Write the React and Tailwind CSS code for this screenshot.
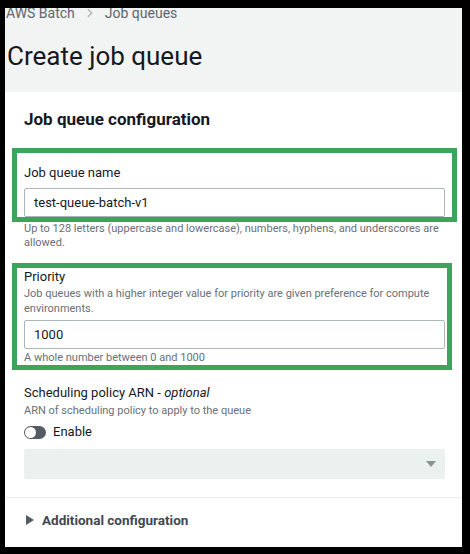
import { ChevronRight } from 'lucide-react';

const font = { fontFamily: 'Roboto, "Noto Sans", sans-serif' };

function TextInput({ value }) {
  return (
    <div className="h-[29px] border border-[#aab7b8] rounded-[2px] bg-white flex items-center px-[9px] text-[13px] text-[#16191f]">
      {value}
    </div>
  );
}

export default function App() {
  return (
    <div className="w-[470px] h-[554px] bg-black pt-[8px] pl-[5px] pr-[8px] pb-[7px]" style={font}>
      <div className="h-full bg-[#f2f3f3] flex flex-col overflow-hidden">
        {/* breadcrumb, cut off at the top */}
        <div className="flex items-center gap-[8px] pl-[1px] -mt-[5px] h-[20px] text-[14px] text-[#5f6670]">
          <span>AWS Batch</span>
          <ChevronRight size={14} className="text-[#aab7b8]" strokeWidth={2.5} />
          <span>Job queues</span>
        </div>

        <h1 className="pl-[2px] mt-[16px] text-[26px] leading-[34px] text-[#16191f] font-normal">
          Create job queue
        </h1>

        <div className="mt-[19px] flex-1 bg-white flex flex-col">
          <div className="pl-[19px] pr-[17px] pt-[16px] pb-[18px]">
            <h2 className="text-[17px] leading-[22px] font-bold text-[#16191f]">
              Job queue configuration
            </h2>
          </div>

          <div className="pl-[19px] pr-[17px] flex flex-col">
            {/* job queue name */}
            <div className="-mx-[12px] border-[5px] border-[#3ca55c] px-[7px] pt-[10px]">
              <div className="text-[13px] leading-[20px] text-[#16191f]">Job queue name</div>
              <div className="mt-[5px]">
                <TextInput value="test-queue-batch-v1" />
              </div>
            </div>
            <div className="text-[11px] leading-[14px] text-[#687078]">
              Up to 128 letters (uppercase and lowercase), numbers, hyphens, and underscores are
              allowed.
            </div>

            {/* priority */}
            <div className="mt-[13px] -ml-[12px] -mr-[7px] border-[5px] border-[#3ca55c] pl-[7px] pr-[2px]">
              <div className="text-[13px] leading-[18px] text-[#16191f]">Priority</div>
              <div className="text-[11px] leading-[15px] text-[#687078]">
                Job queues with a higher integer value for priority are given preference for compute
                environments.
              </div>
              <div className="mt-[4px]">
                <TextInput value="1000" />
              </div>
              <div className="mt-[2px] text-[11px] leading-[14px] text-[#687078]">
                A whole number between 0 and 1000
              </div>
            </div>

            {/* scheduling policy */}
            <div className="mt-[13px] text-[13px] leading-[20px] text-[#16191f]">
              Scheduling policy ARN - <i>optional</i>
            </div>
            <div className="text-[11px] leading-[15px] text-[#687078]">
              ARN of scheduling policy to apply to the queue
            </div>
            <div className="mt-[4px] h-[20px] flex items-center gap-[7px]">
              <div className="w-[22px] h-[13px] rounded-full bg-[#545b64] flex items-center pl-[1px]">
                <div className="w-[11px] h-[11px] rounded-full bg-white" />
              </div>
              <span className="text-[13px] text-[#16191f]">Enable</span>
            </div>
            <div className="mt-[7px] h-[30px] rounded-[2px] bg-[#eaf1ee] flex items-center justify-end pr-[8px]">
              <svg width="12" height="8" viewBox="0 0 12 8">
                <path d="M1 1h10L6 7z" fill="#879596" />
              </svg>
            </div>
          </div>

          <div className="mt-[18px] border-t border-[#eaeded]" />

          <div className="pl-[21px] pt-[12px] h-[20px] box-content flex items-center gap-[8px]">
            <svg width="8" height="10" viewBox="0 0 8 10">
              <path d="M0 0l8 5-8 5z" fill="#545b64" />
            </svg>
            <span className="text-[13.5px] leading-[20px] font-bold text-[#414750]">
              Additional configuration
            </span>
          </div>
        </div>
      </div>
    </div>
  );
}
